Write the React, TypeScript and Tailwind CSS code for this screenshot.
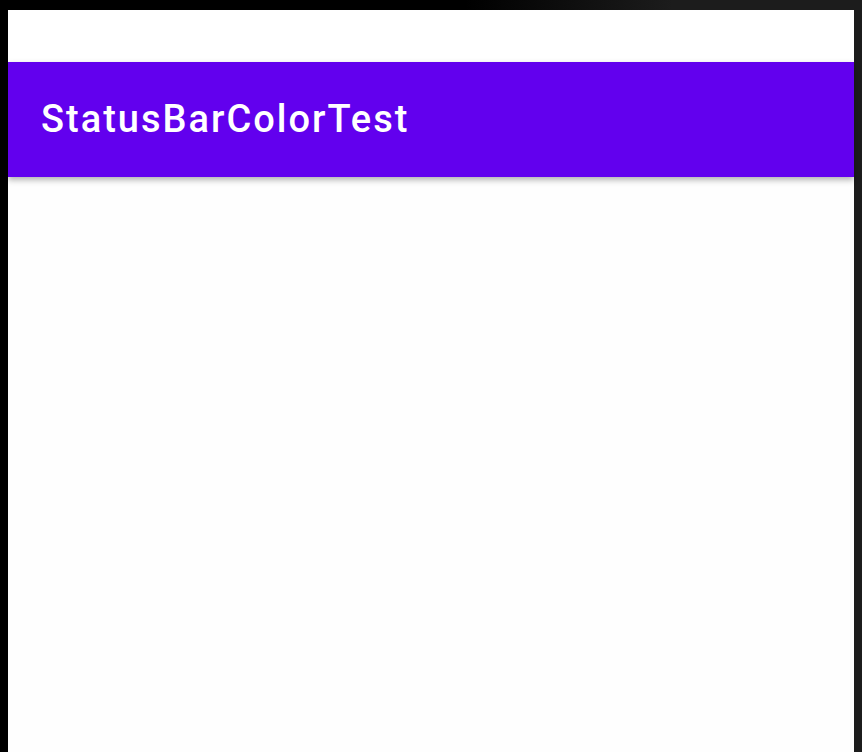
import React from "react";

const App = () => {
  return (
    <div className="flex h-[752px] w-[862px] flex-col overflow-hidden bg-[linear-gradient(90deg,#000_54%,#1c1c1c_78%)] pl-[8px] pr-[8px] pt-[10px]">
      <div className="flex flex-1 flex-col bg-[#fefefe]">
        {/* status bar area */}
        <div className="h-[52px] bg-white" />
        {/* toolbar */}
        <div className="relative z-10 flex h-[115px] items-center bg-[#6200ee] pl-[33px] shadow-[0_3px_6px_rgba(0,0,0,0.3)]">
          <h1 className="font-['Roboto',sans-serif] text-[38px] font-medium tracking-[2px] text-white">
            StatusBarColorTest
          </h1>
        </div>
        <div className="flex-1" />
      </div>
    </div>
  );
};

export default App;
